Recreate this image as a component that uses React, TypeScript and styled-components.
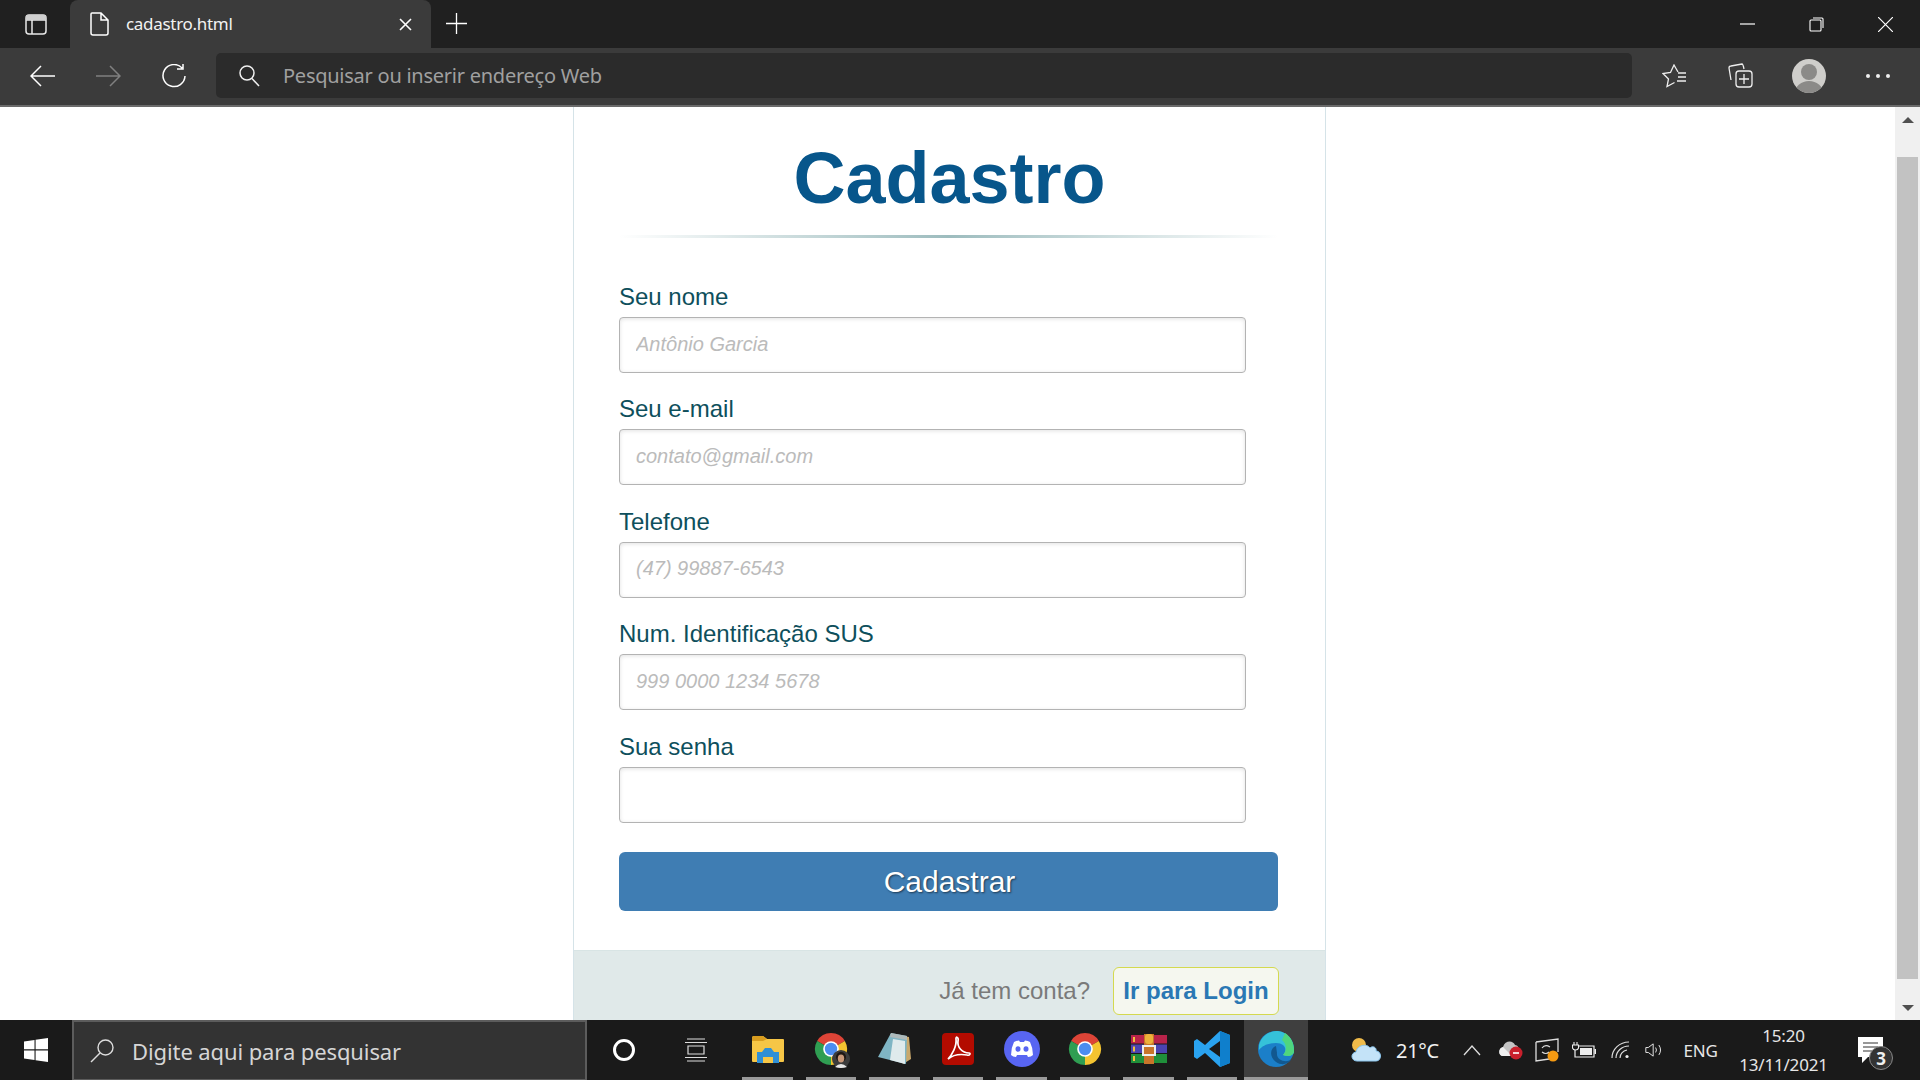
import styled, { createGlobalStyle } from 'styled-components';

const GlobalStyle = createGlobalStyle`
  html, body {
    margin:0;
    padding:0;
    overflow:hidden;
    background:#fff;
  }
  * {
    box-sizing:border-box;
  }
`

const fields = [
  { label: "Seu nome", placeholder: "Antônio Garcia", type: "text" },
  { label: "Seu e-mail", placeholder: "contato@gmail.com", type: "email" },
  { label: "Telefone", placeholder: "(47) 99887-6543", type: "tel" },
  { label: "Num. Identificação SUS", placeholder: "999 0000 1234 5678", type: "text" },
  { label: "Sua senha", placeholder: "", type: "password" },
]

const Line = ({ w, h, d, color = "#fff", sw = 1.5 }: { w: number; h: number; d: string; color?: string; sw?: number }) => (
  <svg width={w} height={h} viewBox={`0 0 ${w} ${h}`} fill="none" stroke={color} strokeWidth={sw}>
    <path d={d} />
  </svg>
)

const FolderIcon = () => (
  <svg width="32" height="28" viewBox="0 0 32 28">
    <path d="M0 3 Q0 1 2 1 H11 L15 4 H31 Q32 4 32 5 V26 Q32 27 31 27 H1 Q0 27 0 26z" fill="#f6c646" />
    <path d="M0 3 Q0 1 2 1 H11 L15 4 L11 6 H0z" fill="#d99d1f" />
    <path d="M5 28 V17 H10 L13 13 H19 L22 17 H27 V28 H21 V22 H11 V28z" fill="#2f8fd6" />
    <rect x="11" y="22" width="10" height="6" fill="#f6c646" />
  </svg>
)

const ChromeIcon = () => (
  <svg width="34" height="34" viewBox="0 0 34 34">
    <path d="M17 17 L3.14 9 A16 16 0 0 1 30.86 9z" fill="#dd4437" />
    <path d="M17 17 L30.86 9 A16 16 0 0 1 17 33z" fill="#f4c430" />
    <path d="M17 17 L17 33 A16 16 0 0 1 3.14 9z" fill="#2f9e52" />
    <circle cx="17" cy="17" r="7.8" fill="#fff" />
    <circle cx="17" cy="17" r="6.2" fill="#4b8df0" />
  </svg>
)

const ProfileBadge = () => (
  <BadgeWrap>
    <svg width="18" height="18" viewBox="0 0 18 18">
      <circle cx="9" cy="9" r="9" fill="#3c3c3c" />
      <circle cx="9" cy="7" r="5" fill="#1f1712" />
      <ellipse cx="9" cy="8.5" rx="3.2" ry="4" fill="#c99878" />
      <path d="M3 17 Q9 11 15 17 Q9 19 3 17z" fill="#e8e8e8" />
    </svg>
  </BadgeWrap>
)

const NotepadIcon = () => (
  <svg width="33" height="32" viewBox="0 0 33 32">
    <path d="M12 1 L31 4 L33 26 L25 31z" fill="#c9a86c" />
    <path d="M13 0 L29 3 L28 31 L0 24z" fill="#7fb5c4" />
    <path d="M15 6 L27 8 L27 31 L12 27z" fill="#dfeaec" />
    <path d="M13 0 L29 3 L29 7 L12 4z" fill="#aeb9ba" />
  </svg>
)

const PdfIcon = () => (
  <svg width="32" height="32" viewBox="0 0 32 32">
    <rect width="32" height="32" rx="4" fill="#b30b00" />
    <path d="M6 26 C10 22 15 13 14 6 C13.5 3 17 4 16 8 C15 14 20 20 27 20 C29 20 28 23 25 22 C19 21 12 21 6 26z" fill="none" stroke="#fff" strokeWidth="1.7" />
  </svg>
)

const DiscordIcon = () => (
  <svg width="36" height="36" viewBox="0 0 36 36">
    <circle cx="18" cy="18" r="18" fill="#5865f2" />
    <path d="M10 11 Q13 9.5 15 9.5 L16 11 H20 L21 9.5 Q24 9.5 26 11 Q29 17 29 24 Q27 26 24 26 L23 24 H13 L12 26 Q9 26 7 24 Q7 17 10 11z" fill="#fff" />
    <ellipse cx="14" cy="18" rx="2.5" ry="2.8" fill="#5865f2" />
    <ellipse cx="22" cy="18" rx="2.5" ry="2.8" fill="#5865f2" />
  </svg>
)

const RarIcon = () => (
  <svg width="36" height="30" viewBox="0 0 36 30">
    <rect y="1" width="36" height="8.5" fill="#b8234a" />
    <rect y="10.5" width="36" height="8.5" fill="#4a43b0" />
    <rect y="20" width="36" height="9" fill="#1f8f3a" />
    <rect x="2" y="3" width="2" height="5" fill="#f0c040" />
    <rect x="2" y="12.5" width="2" height="5" fill="#f0c040" />
    <rect x="2" y="22" width="2" height="5" fill="#f0c040" />
    <rect x="13" y="0" width="10" height="30" fill="#c8752a" />
    <rect x="14" y="0" width="8" height="10" rx="3" fill="#eeb13a" />
    <rect x="12" y="12" width="12" height="9" fill="none" stroke="#eee" strokeWidth="2" />
  </svg>
)

const VscodeIcon = () => (
  <svg width="36" height="36" viewBox="0 0 36 36">
    <path d="M26 0 L36 4 V32 L26 36 L11 22 L3 28 L0 26 V10 L3 8 L11 14z M26 10 L15 18 L26 26z" fill="#2aa3f0" fillRule="evenodd" />
    <path d="M26 0 L36 4 V32 L26 36z M26 10 V26 L26 26z" fill="#0f7fcc" />
  </svg>
)

const EdgeIcon = () => (
  <svg width="36" height="36" viewBox="0 0 36 36">
    <circle cx="18" cy="18" r="18" fill="#1b7fc9" />
    <path d="M1 14 C4 3 13 0 20 0 C30 1 36 10 36 20 C36 25 30 26 25 24 C30 19 27 12 18 12 C10 12 4 15 1 19z" fill="#35c1d9" />
    <path d="M27 2 C33 6 36 12 36 20 C36 25 30 26 25 24 C29 20 29 13 24 9z" fill="#4fd67e" />
    <path d="M18 15 C12 17 11 26 18 31 C24 35 30 33 33 29 C27 32 18 29 19 22z" fill="#12588f" />
  </svg>
)

const WeatherIcon = () => (
  <svg width="30" height="24" viewBox="0 0 30 24">
    <circle cx="8" cy="7" r="7" fill="#f0bb4a" />
    <path d="M6 23 C0 23 -1 15 5 14 C6 7 16 5 19 10 C22 7 26 10 25 13 C31 13 31 23 25 23z" fill="#c4e3f8" stroke="#8cc6ee" />
  </svg>
)

const OneDriveIcon = () => (
  <svg width="24" height="20" viewBox="0 0 24 20">
    <path d="M4 16 C-1 16 -1 8 4 7 C6 0 14 0 16 5 C19 5 21 9 20 16z" fill="#c4c4c4" />
    <path d="M4 16 C-1 16 -1 8 4 7 L13 16z" fill="#efefef" />
    <circle cx="17" cy="13" r="6.5" fill="#c9202c" />
    <rect x="14" y="12.2" width="6" height="1.6" fill="#fff" />
  </svg>
)

const SyncIcon = () => (
  <svg width="24" height="24" viewBox="0 0 24 24">
    <path d="M1 4 L23 1 V14 M1 4 V23 L14 21" fill="none" stroke="#ddd" strokeWidth="1.3" />
    <path d="M7 10 Q10 6 15 9 M14 14 Q11 17 7 14" fill="none" stroke="#ddd" strokeWidth="1.2" />
    <circle cx="18" cy="18" r="5.5" fill="#f59a12" />
  </svg>
)

const BatteryIcon = () => (
  <svg width="24" height="16" viewBox="0 0 24 16">
    <path d="M2 0 V3 M5 0 V3 M0.5 3 H6.5 V6 Q6 8 3.5 8 Q1 8 0.5 6z" fill="none" stroke="#eee" strokeWidth="1.1" />
    <path d="M6 4 H22 V15 H3 V8" fill="none" stroke="#eee" strokeWidth="1.2" />
    <rect x="8" y="6" width="12" height="7" fill="#eee" />
    <rect x="22.5" y="7" width="1.5" height="5" fill="#eee" />
  </svg>
)

const WifiIcon = () => (
  <svg width="20" height="18" viewBox="0 0 20 18" fill="none" stroke="#ddd" strokeWidth="1.2">
    <path d="M1 17 A17 16 0 0 1 18 1 M5 17 A13 12 0 0 1 18 5 M9 17 A9 8 0 0 1 16 9" />
    <circle cx="16" cy="15.5" r="1.6" fill="#eee" stroke="none" />
  </svg>
)

const SpeakerIcon = () => (
  <svg width="22" height="16" viewBox="0 0 22 16" fill="none" stroke="#e6e6e6" strokeWidth="1.2">
    <path d="M1 5 H4 L10 0.5 V15.5 L4 11 H1z M13 5 Q15 8 13 11 M17 2 Q21 8 17 14" />
  </svg>
)

const App = () => {
  return (
    <Screen>
      <GlobalStyle />

      <TitleBar>
        <PanelSlot>
          <svg width="22" height="21" viewBox="0 0 22 21" fill="none" stroke="#e8e8e8" strokeWidth="1.5">
            <rect x="1" y="1" width="20" height="19" rx="3" />
            <path d="M1 6 H21 M7 6 V20" />
            <rect x="1" y="1" width="20" height="5" fill="#cfcfcf" stroke="none" />
          </svg>
        </PanelSlot>
        <Tab>
          <Line w={19} h={24} d="M2 1 H11 L18 8 V21 Q18 23 16 23 H3 Q1 23 1 21 V2 Q1 1 2 1z M11 1 V8 H18" />
          <TabTitle>cadastro.html</TabTitle>
          <Line w={13} h={13} d="M1 1 L12 12 M12 1 L1 12" sw={1.6} />
        </Tab>
        <PlusSlot>
          <Line w={21} h={21} d="M10.5 0 V21 M0 10.5 H21" sw={1.3} />
        </PlusSlot>
        <WindowControls>
          <ControlSlot><Line w={15} h={2} d="M0 1 H15" sw={1.2} /></ControlSlot>
          <ControlSlot>
            <Line w={15} h={15} d="M1 4 Q1 3 2 3 H11 Q12 3 12 4 V13 Q12 14 11 14 H2 Q1 14 1 13z M4 1 H13 Q14 1 14 2 V11" sw={1.1} />
          </ControlSlot>
          <ControlSlot><Line w={15} h={15} d="M0 0 L15 15 M15 0 L0 15" sw={1.2} /></ControlSlot>
        </WindowControls>
      </TitleBar>

      <NavBar>
        <NavSlot><Line w={25} h={22} d="M1 11 H25 M11 1 L1 11 L11 21" /></NavSlot>
        <NavSlot><Line w={25} h={22} d="M0 11 H24 M14 1 L24 11 L14 21" color="#808080" /></NavSlot>
        <NavSlot>
          <Line w={25} h={24} d="M20 4 A11 11 0 1 0 23 12 M21 0 V5 H15" />
        </NavSlot>
        <AddressBar>
          <svg width="21" height="22" viewBox="0 0 21 22" fill="none" stroke="#f0f0f0" strokeWidth="1.5">
            <circle cx="8" cy="8" r="7" />
            <path d="M13 13.5 L20 21" />
          </svg>
          <AddressText>Pesquisar ou inserir endereço Web</AddressText>
        </AddressBar>
        <NavSlot>
          <svg width="25" height="24" viewBox="0 0 25 24" fill="none" stroke="#eee" strokeWidth="1.3">
            <path d="M16 8 L12 1 L8.5 8.5 L1 9.5 L6.5 15 L5 22.5 L12.5 18.5" />
            <path d="M16 9 H24 M16 13 H24 M15 17 H24" />
          </svg>
        </NavSlot>
        <NavSlot>
          <svg width="25" height="25" viewBox="0 0 25 25" fill="none" stroke="#eee" strokeWidth="1.3">
            <path d="M3 17 L1 5 Q1 3 3 3 L14 1 Q15 1 16 6" />
            <rect x="8" y="8" width="16" height="16" rx="3" />
            <path d="M16 11 V21 M11 16 H21" />
          </svg>
        </NavSlot>
        <AvatarSlot>
          <Avatar>
            <AvatarHead />
            <AvatarBody />
          </Avatar>
        </AvatarSlot>
        <NavSlot>
          <Dots><Dot /><Dot /><Dot /></Dots>
        </NavSlot>
      </NavBar>

      <Viewport>
        <Page>
          <Card>
            <CardBody>
              <Title>Cadastro</Title>
              <Rule />
              <Form>
                {fields.map((field) => (
                  <Field key={field.label}>
                    <Label>{field.label}</Label>
                    <Input type={field.type} placeholder={field.placeholder} />
                  </Field>
                ))}
                <SubmitButton type="button">Cadastrar</SubmitButton>
              </Form>
            </CardBody>
            <CardFooter>
              <FooterText>Já tem conta?</FooterText>
              <LoginLink href="#">Ir para Login</LoginLink>
            </CardFooter>
          </Card>
        </Page>
        <ScrollBar>
          <ScrollSlot $height={26}><ArrowUp /></ScrollSlot>
          <ScrollThumb />
          <ScrollSlot $height={24}><ArrowDown /></ScrollSlot>
        </ScrollBar>
      </Viewport>

      <TaskBar>
        <StartSlot>
          <svg width="24" height="24" viewBox="0 0 24 24" fill="#fff">
            <path d="M0 3.5 L10.5 2 V11.3 H0z M11.6 1.8 L24 0 V11.3 H11.6z M0 12.6 H10.5 V22 L0 20.5z M11.6 12.6 H24 V24 L11.6 22.2z" />
          </svg>
        </StartSlot>
        <TaskSearch>
          <svg width="24" height="24" viewBox="0 0 24 24" fill="none" stroke="#ddd" strokeWidth="1.4">
            <circle cx="15.5" cy="8.5" r="7.5" />
            <path d="M10 14 L1 23" />
          </svg>
          <TaskSearchText>Digite aqui para pesquisar</TaskSearchText>
        </TaskSearch>
        <TaskSlot $width={73}><CortanaRing /></TaskSlot>
        <TaskSlot $width={72}>
          <Line w={22} h={24} d="M2 1 H20 M0 4.5 H22 M3 8 H19 V16 H3z M0 19.5 H22 M2 23 H20" color="#ddd" sw={1.2} />
        </TaskSlot>
        <PinnedGroup>
          <PinnedSlot><FolderIcon /></PinnedSlot>
          <PinnedSlot>
            <ChromeWrap>
              <ChromeIcon />
              <ProfileBadge />
            </ChromeWrap>
          </PinnedSlot>
          <PinnedSlot><NotepadIcon /></PinnedSlot>
          <PinnedSlot><PdfIcon /></PinnedSlot>
          <PinnedSlot><DiscordIcon /></PinnedSlot>
          <PinnedSlot><ChromeIcon /></PinnedSlot>
          <PinnedSlot><RarIcon /></PinnedSlot>
          <PinnedSlot><VscodeIcon /></PinnedSlot>
          <PinnedSlot $active><EdgeIcon /></PinnedSlot>
        </PinnedGroup>

        <Tray>
          <TraySlot $width={50}><WeatherIcon /></TraySlot>
          <TraySlot $width={54}><Temperature>21°C</Temperature></TraySlot>
          <TraySlot $width={54}><Line w={18} h={11} d="M1 10 L9 1 L17 10" color="#ddd" sw={1.3} /></TraySlot>
          <TraySlot $width={24}><OneDriveIcon /></TraySlot>
          <TraySlot $width={48}><SyncIcon /></TraySlot>
          <TraySlot $width={26}><BatteryIcon /></TraySlot>
          <TraySlot $width={48}><WifiIcon /></TraySlot>
          <TraySlot $width={18}><SpeakerIcon /></TraySlot>
          <TraySlot $width={76}><TrayText>ENG</TrayText></TraySlot>
          <Clock $width={90}>
            <TrayText>15:20</TrayText>
            <TrayText>13/11/2021</TrayText>
          </Clock>
          <TraySlot $width={84}>
            <NotifyWrap>
              <svg width="25" height="26" viewBox="0 0 25 26">
                <path d="M0 0 H25 V20 H10 L4 26 V20 H0z" fill="#fff" />
                <path d="M5 6 H20 M5 10 H20 M5 14 H15" stroke="#333" strokeWidth="1.2" />
              </svg>
              <NotifyBadge>3</NotifyBadge>
            </NotifyWrap>
          </TraySlot>
        </Tray>
      </TaskBar>
    </Screen>
  )
}

export default App

const Screen = styled.div`
  display:flex;
  flex-direction:column;
  width:1920px;
  height:1080px;
  overflow:hidden;
  font-family:"Liberation Sans", Arial, sans-serif;
`

const TitleBar = styled.div`
  display:flex;
  align-items:stretch;
  height:48px;
  background:#202020;
`

const PanelSlot = styled.div`
  display:flex;
  align-items:center;
  justify-content:center;
  width:70px;
  padding-left:2px;
`

const Tab = styled.div`
  display:flex;
  align-items:center;
  width:361px;
  padding:0 19px 0 20px;
  background:#3b3b3b;
  border-radius:8px 8px 0 0;
`

const TabTitle = styled.span`
  flex:1;
  margin:0 0 2px 17px;
  font-family:"Noto Sans", "Open Sans", sans-serif;
  font-size:17px;
  letter-spacing:-0.3px;
  color:#f2f2f2;
`

const PlusSlot = styled.div`
  display:flex;
  align-items:center;
  justify-content:center;
  width:50px;
  padding-bottom:2px;
`

const WindowControls = styled.div`
  display:flex;
  margin-left:auto;
`

const ControlSlot = styled.div`
  display:flex;
  align-items:center;
  justify-content:center;
  width:69px;
`

const NavBar = styled.div`
  display:flex;
  align-items:center;
  height:59px;
  padding:0 9px 2px;
  background:#3b3b3b;
  border-bottom:2px solid #6a6a6a;
`

const NavSlot = styled.div`
  display:flex;
  align-items:center;
  justify-content:center;
  width:66px;
  height:45px;
`

const AddressBar = styled.div`
  display:flex;
  flex:1;
  align-items:center;
  gap:23px;
  height:45px;
  margin:0 9px;
  padding-left:23px;
  background:#2b2b2b;
  border-radius:5px;
`

const AddressText = styled.span`
  font-family:"Noto Sans", "Open Sans", sans-serif;
  font-size:20px;
  letter-spacing:-0.25px;
  color:#a0a0a0;
`

const AvatarSlot = styled(NavSlot)`
  width:72px;
`

const Avatar = styled.div`
  position:relative;
  width:34px;
  height:34px;
  overflow:hidden;
  background:#cfcecb;
  border-radius:50%;
`

const AvatarHead = styled.div`
  position:absolute;
  top:5px;
  left:9px;
  width:16px;
  height:16px;
  background:#8b8a88;
  border-radius:50%;
`

const AvatarBody = styled.div`
  position:absolute;
  top:22px;
  left:3px;
  width:28px;
  height:24px;
  background:#8b8a88;
  border-radius:50%;
`

const Dots = styled.div`
  display:flex;
  gap:6px;
`

const Dot = styled.span`
  width:4px;
  height:4px;
  background:#eee;
  border-radius:50%;
`

const Viewport = styled.div`
  display:flex;
  flex:1;
  min-height:0;
  background:#fff;
`

const Page = styled.div`
  flex:1;
  padding-left:573px;
  overflow:hidden;
`

const Card = styled.div`
  display:flex;
  flex-direction:column;
  width:753px;
  height:100%;
  border-left:1px solid #d5e3e8;
  border-right:1px solid #d5e3e8;
`

const CardBody = styled.div`
  flex:1;
  padding:0 47px 0 45px;
`

const Title = styled.h1`
  margin:0;
  padding:35px 0 21px 2px;
  font-size:72px;
  line-height:72px;
  font-weight:700;
  text-align:center;
  color:#07568b;
`

const Rule = styled.div`
  height:3px;
  background:linear-gradient(to right, rgba(157,188,190,0), #9dbcbe 50%, rgba(157,188,190,0));
`

const Form = styled.form`
  display:flex;
  flex-direction:column;
  gap:22.45px;
  margin-top:45px;
`

const Field = styled.div`
  display:flex;
  flex-direction:column;
  gap:6px;
`

const Label = styled.label`
  font-size:24px;
  line-height:28px;
  color:#0e4f5c;
`

const Input = styled.input`
  width:627px;
  height:56px;
  padding:0 16px 2px;
  font-family:"Liberation Sans", Arial, sans-serif;
  font-size:20px;
  background:#fff;
  border:1px solid #b3b3b3;
  border-radius:4px;
  box-shadow:inset 0 1px 4px rgba(0,0,0,0.12);
  outline:none;

  &::placeholder {
    font-style:italic;
    color:#bbb;
    opacity:1;
  }
`

const SubmitButton = styled.button`
  height:59px;
  margin-top:7px;
  padding:0 0 0 2px;
  font-family:"Liberation Sans", Arial, sans-serif;
  font-size:30px;
  color:#fff;
  text-shadow:1px 1px 2px rgba(0,0,0,0.55);
  background:#3f7db3;
  border:none;
  border-radius:6px;
`

const CardFooter = styled.div`
  display:flex;
  align-items:center;
  justify-content:flex-end;
  gap:23px;
  height:70px;
  padding:16px 46px 6px 0;
  background:#e0e9e9;
  border-top:1px solid #d8e4e4;
`

const FooterText = styled.span`
  font-size:24px;
  color:#7a7a7a;
`

const LoginLink = styled.a`
  display:flex;
  align-items:center;
  justify-content:center;
  width:166px;
  height:48px;
  font-size:24px;
  font-weight:700;
  color:#2a78b4;
  text-decoration:none;
  background:#f5f7ef;
  border:1px solid #d4d94f;
  border-radius:6px;
`

const ScrollBar = styled.div`
  display:flex;
  flex-direction:column;
  width:25px;
  background:#f0f0f0;
`

const ScrollSlot = styled.div<{ $height: number }>`
  display:flex;
  align-items:center;
  justify-content:center;
  height:${props => props.$height}px;
`

const ArrowUp = styled.div`
  width:0;
  height:0;
  border-left:6px solid transparent;
  border-right:6px solid transparent;
  border-bottom:6px solid #505050;
`

const ArrowDown = styled.div`
  width:0;
  height:0;
  border-left:6px solid transparent;
  border-right:6px solid transparent;
  border-top:6px solid #505050;
`

const ScrollThumb = styled.div`
  flex:1;
  margin:24px 2px 17px;
  background:#c2c2c2;
`

const TaskBar = styled.div`
  display:flex;
  align-items:stretch;
  height:60px;
  background:#1a1a1a;
`

const StartSlot = styled.div`
  display:flex;
  align-items:center;
  justify-content:center;
  width:72px;
`

const TaskSearch = styled.div`
  display:flex;
  align-items:center;
  gap:18px;
  width:515px;
  padding-left:16px;
  background:#333;
  border:2px solid #5c5c5c;
  border-bottom-width:1px;
`

const TaskSearchText = styled.span`
  font-family:"Noto Sans", "Open Sans", sans-serif;
  font-size:22px;
  letter-spacing:-0.1px;
  color:#d6d6d6;
`

const TaskSlot = styled.div<{ $width: number }>`
  display:flex;
  align-items:center;
  justify-content:center;
  width:${props => props.$width}px;
`

const CortanaRing = styled.div`
  width:22px;
  height:22px;
  border:3px solid #fff;
  border-radius:50%;
`

const PinnedGroup = styled.div`
  display:flex;
  margin-left:4px;
`

const PinnedSlot = styled.div<{ $active?: boolean }>`
  position:relative;
  display:flex;
  align-items:center;
  justify-content:center;
  width:63.5px;
  padding-bottom:2px;
  background:${props => props.$active ? "#3f3f3f" : "transparent"};

  &::after {
    content:"";
    position:absolute;
    bottom:0;
    left:${props => props.$active ? "0" : "6px"};
    right:${props => props.$active ? "0" : "7px"};
    height:3px;
    background:#9a9a9a;
  }
`

const ChromeWrap = styled.div`
  position:relative;
  display:flex;
`

const BadgeWrap = styled.div`
  position:absolute;
  right:-2px;
  bottom:-2px;
  display:flex;
`

const Tray = styled.div`
  display:flex;
  align-items:center;
  padding-left:33px;
`

const TraySlot = styled.div<{ $width: number }>`
  display:flex;
  align-items:center;
  justify-content:center;
  width:${props => props.$width}px;
`

const Temperature = styled.span`
  font-family:"Noto Sans", "Open Sans", sans-serif;
  font-size:20px;
  letter-spacing:-0.3px;
  color:#f0f0f0;
`

const TrayText = styled.span`
  font-family:"Noto Sans", "Open Sans", sans-serif;
  font-size:17px;
  line-height:29px;
  letter-spacing:-0.2px;
  color:#e6e6e6;
`

const Clock = styled(TraySlot)`
  flex-direction:column;
`

const NotifyWrap = styled.div`
  position:relative;
  display:flex;
`

const NotifyBadge = styled.div`
  position:absolute;
  top:9px;
  left:11px;
  display:flex;
  align-items:center;
  justify-content:center;
  width:24px;
  height:24px;
  font-family:"Noto Sans", "Open Sans", sans-serif;
  font-size:17px;
  font-weight:700;
  color:#f0f0f0;
  background:#333;
  border:1px solid #888;
  border-radius:50%;
`
